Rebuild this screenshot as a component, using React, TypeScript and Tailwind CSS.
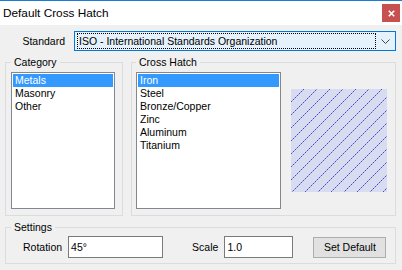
import React from "react";

function Hatch() {
  const W = 96;
  const H = 103;
  const dots: React.ReactElement[] = [];
  for (let c = 12; c <= W + H; c += 13) {
    for (let x = 0; x < W; x++) {
      const y = c - x;
      if (y < 0 || y >= H) continue;
      dots.push(
        <rect
          key={`${c}-${x}`}
          x={x}
          y={y}
          width={1}
          height={1}
          fill={x % 2 === 0 ? "#4a4acb" : "#9a9ae0"}
        />
      );
    }
  }
  return (
    <svg width={W} height={H} viewBox={`0 0 ${W} ${H}`} shapeRendering="crispEdges" className="block">
      <rect x={0} y={0} width={W} height={H} fill="#d8dcf0" />
      {dots}
    </svg>
  );
}

function ListBox({ items, width }: { items: string[]; width: string }) {
  return (
    <div className={`${width} h-[137px] border border-[#828790] bg-white p-px`}>
      {items.map((it, i) => (
        <div
          key={it}
          className={`h-[13px] leading-[13px] pl-[2px] ${i === 0 ? "bg-[#3399ff] text-white" : "text-black"}`}
        >
          {it}
        </div>
      ))}
    </div>
  );
}

export default function App() {
  return (
    <div
      className="w-[402px] h-[270px] bg-[#f0f0f0] overflow-hidden text-black text-[10.5px] leading-[13px]"
      style={{ fontFamily: '"Liberation Sans", Arial, sans-serif' }}
    >
      {/* Title bar */}
      <div className="h-[25px] bg-white border-t border-[#1a7fd4] flex items-center justify-between pl-[3px] pr-[2px]">
        <span className="text-[11.8px] leading-[14px]">Default Cross Hatch</span>
        <div className="w-[18px] h-[18px] bg-[#c75050] flex items-center justify-center">
          <svg width="7" height="7" viewBox="0 0 7 7">
            <path d="M0.8 0.8 L6.2 6.2 M6.2 0.8 L0.8 6.2" stroke="white" strokeWidth="1.6" />
          </svg>
        </div>
      </div>

      <div className="pl-[5px] pr-[6px]">
        {/* Standard row */}
        <div className="mt-[6px] flex items-center h-[20px]">
          <div className="w-[69px] pr-[9px] text-right">Standard</div>
          <div className="flex-1 h-[20px] border border-[#0078d7] bg-[#e5f1fb] flex">
            <div className="flex-1 ml-[2px] my-px border border-dotted border-black flex items-center pl-px">
              ISO - International Standards Organization
            </div>
            <div className="w-[19px] flex items-center justify-center">
              <svg width="9" height="5" viewBox="0 0 9 5">
                <polyline points="0.5,0.5 4.5,4.5 8.5,0.5" fill="none" stroke="#444" strokeWidth="1" />
              </svg>
            </div>
          </div>
        </div>

        {/* Groups row */}
        <div className="mt-[5px] flex gap-[8px]">
          <fieldset className="w-[118px] h-[160px] border border-[#dcdcdc] pl-[5px] pt-[3px]">
            <legend className="px-[3px] leading-[13px]">Category</legend>
            <ListBox items={["Metals", "Masonry", "Other"]} width="w-[104px]" />
          </fieldset>
          <fieldset className="w-[265px] h-[160px] border border-[#dcdcdc] pl-[4px] pt-[3px]">
            <legend className="px-[3px] leading-[13px]">Cross Hatch</legend>
            <div className="flex">
              <ListBox
                items={["Iron", "Steel", "Bronze/Copper", "Zinc", "Aluminum", "Titanium"]}
                width="w-[145px]"
              />
              <div className="ml-[10px] mt-[17px]">
                <Hatch />
              </div>
            </div>
          </fieldset>
        </div>

        {/* Settings */}
        <fieldset className="mt-[5px] h-[43px] border border-[#dcdcdc] pl-[5px] pt-[2px]">
          <legend className="px-[3px] leading-[13px]">Settings</legend>
          <div className="flex items-center h-[22px]">
            <span className="ml-[12px]">Rotation</span>
            <div className="ml-[6px] w-[95px] h-[22px] border border-[#7a7a7a] bg-white flex items-center pl-[2px]">
              45°
            </div>
            <span className="ml-[29px]">Scale</span>
            <div className="ml-[6px] w-[69px] h-[22px] border border-[#7a7a7a] bg-white flex items-center pl-[2px]">
              1.0
            </div>
            <div className="ml-[20px] w-[73px] h-[21px] border border-[#adadad] bg-[#e1e1e1] flex items-center justify-center">
              Set Default
            </div>
          </div>
        </fieldset>
      </div>
    </div>
  );
}
